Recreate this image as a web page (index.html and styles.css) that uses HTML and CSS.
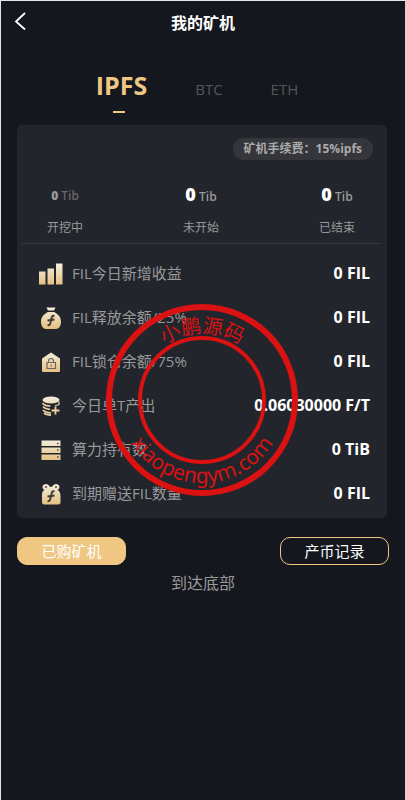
FILE: index.html
```html
<!DOCTYPE html>
<html lang="zh-CN">
<head>
<meta charset="utf-8">
<meta name="viewport" content="width=device-width, initial-scale=1">
<title>我的矿机</title>
<link rel="stylesheet" href="styles.css">
</head>
<body>
<svg class="defs" aria-hidden="true">
  <defs>
    <linearGradient id="gold" x1="0" y1="0" x2="0" y2="24" gradientUnits="userSpaceOnUse">
      <stop offset="0" stop-color="#f4f1e6"/>
      <stop offset="1" stop-color="#e4bd7b"/>
    </linearGradient>
  </defs>
</svg>
<header class="topbar">
  <a class="back" href="#" aria-label="返回">
    <svg width="12" height="18" viewBox="0 0 12 18"><path d="M11 1 2 9.500l9 8" fill="none" stroke="#fff" stroke-width="1.800"/></svg>
  </a>
  <h1>我的矿机</h1>
</header>
<nav class="tabs">
  <button class="tab active" type="button">IPFS</button>
  <button class="tab" type="button">BTC</button>
  <button class="tab" type="button">ETH</button>
</nav>
<main>
  <section class="card">
    <p class="fee">矿机手续费：15%ipfs</p>
    <div class="stats">
      <div class="stat muted"><p class="amount"><b>0</b> <span>Tib</span></p><p>开挖中</p></div>
      <div class="stat"><p class="amount"><b>0</b> <span>Tib</span></p><p>未开始</p></div>
      <div class="stat"><p class="amount"><b>0</b> <span>Tib</span></p><p>已结束</p></div>
    </div>
    <ul class="rows">
      <li>
        <svg class="icon" viewBox="0 0 24 24"><path d="M0 9.500h6.500v13H0zM8.500 6.500H15v16H8.500zM17 1.500h6.500v21H17z" fill="url(#gold)"/></svg>
        <span>FIL今日新增收益</span><b>0 FIL</b>
      </li>
      <li>
        <svg class="icon" viewBox="0 0 24 24"><path d="M7.500 1.500h9L15 4.500H9zM9 6h6c4 2 7 5 7 9.500 0 4.500-2 7.500-5 7.500H7c-3 0-5-3-5-7.500C2 11 5 8 9 6z" fill="url(#gold)"/><path d="M15.500 10c-2.500-1-3 1.500-3.500 4.500s-1 5.500-3.500 4.500M8.500 14.500l7-1" fill="none" stroke="#3d3a36" stroke-width="1.800"/></svg>
        <span>FIL释放余额/25%</span><b>0 FIL</b>
      </li>
      <li>
        <svg class="icon" viewBox="0 0 24 24"><path d="M12 2.500l9 6V21q0 1-1 1H4q-1 0-1-1V8.500z" fill="url(#gold)"/><path d="M8 12.500h8.500v6H8zM9.500 12.500V11a2.500 2.500 0 0 1 5 0v1.500M12.200 14.500v2" fill="none" stroke="#6b655a" stroke-width="1.200"/></svg>
        <span>FIL锁仓余额/75%</span><b>0 FIL</b>
      </li>
      <li>
        <svg class="icon" viewBox="0 0 24 24"><ellipse cx="12" cy="6" rx="8.500" ry="3.500" fill="url(#gold)"/><path d="M20 7.500v3q-2 1-4 1" fill="none" stroke="#e9d8b2" stroke-width="1.200"/><path d="M3.500 9q2 3 8 3M4 12.500q2 2.500 7 2.800M4 16q2 2.500 8 3M5 19.200q2 1.800 7 2" fill="none" stroke="#e9d1a2" stroke-width="1.700"/><path d="M16.500 12.500v8M12.500 16.500h8" fill="none" stroke="#e9d1a2" stroke-width="1.800"/></svg>
        <span>今日单T产出</span><b>0.06030000 F/T</b>
      </li>
      <li>
        <svg class="icon" viewBox="0 0 24 24"><path d="M2.500 2.500h19V8h-19zM2.500 9.500h19V15h-19zM2.500 16.500h19V22h-19z" fill="url(#gold)"/><path d="M18 5.500h1.500M18 12h1.500M18 19h1.500" stroke="#4c4740" stroke-width="1.500"/></svg>
        <span>算力持有数</span><b>0 TiB</b>
      </li>
      <li>
        <svg class="icon" viewBox="0 0 24 24"><path d="M5.500 8C2 6 3.500 2 7 2c3 0 3 3 5 3s2-3 5-3c3.500 0 5 4 1.500 6C21 9 21.500 12 21.500 14v6q0 2.500-2.500 2.500H5.500Q3 22.500 3 20v-6c0-2 0-5 2.500-6z" fill="url(#gold)"/><circle cx="7" cy="5" r="1" fill="#4c4740"/><circle cx="17" cy="5" r="1" fill="#4c4740"/><path d="M15.500 9.500c-2.500-1-3 1.500-3.500 4.500s-1 6-3.500 5M8.500 14.500l7-1" fill="none" stroke="#3d3a36" stroke-width="1.800"/></svg>
        <span>到期赠送FIL数量</span><b>0 FIL</b>
      </li>
    </ul>
    <svg class="stamp" viewBox="-98 -98 196 196">
      <defs>
        <path id="arc-top" d="M-67 0A67 67 0 0 1 67 0"/>
        <path id="arc-bottom" d="M-83 0A83 83 0 0 0 83 0"/>
      </defs>
      <circle r="93" stroke-width="6"/>
      <circle r="62" stroke-width="4"/>
      <text class="stamp-name"><textPath href="#arc-top" startOffset="50%">小鹏源码</textPath></text>
      <text class="stamp-site"><textPath href="#arc-bottom" startOffset="50%">xiaopengym.com</textPath></text>
    </svg>
  </section>
  <div class="actions">
    <button class="btn filled" type="button">已购矿机</button>
    <button class="btn" type="button">产币记录</button>
  </div>
  <p class="end">到达底部</p>
</main>
</body>
</html>
```
FILE: styles.css
```css
* { box-sizing: border-box; margin: 0; padding: 0; }
body {
  min-height: 100vh;
  border: solid #dfe7e6;
  border-width: 1px 0 0 1px;
  background: #14171e;
  color: #999;
  font-family: "Open Sans", "Noto Sans CJK SC", sans-serif;
  font-size: 15px;
}
button { border: 0; background: none; font: inherit; color: inherit; }
.defs { position: absolute; width: 0; height: 0; }
.topbar {
  display: grid;
  grid-template-columns: 40px 1fr 40px;
  align-items: center;
  height: 44px;
}
.back { display: flex; padding: 0 0 4px 13px; }
h1 { color: #fff; font-size: 16px; line-height: 24px; text-align: center; }
.tabs {
  display: flex;
  justify-content: center;
  align-items: baseline;
  height: 80px;
  padding: 22px 12px 0 0;
}
.tab { position: relative; padding: 0 24px; line-height: 36px; color: #555659; }
.tab.active { color: #efc783; font-size: 25px; font-weight: 700; }
.tab.active::after {
  content: "";
  position: absolute;
  left: 41%;
  bottom: -10px;
  width: 12px;
  height: 2px;
  background: #efc783;
}
.card {
  position: relative;
  margin: 0 18px 0 16px;
  padding: 13px 4px 2px;
  border-radius: 5px;
  background: #22252c;
}
.fee {
  width: fit-content;
  margin: 0 10px 0 auto;
  padding: 0 11px;
  border-radius: 11px;
  background: #35363b;
  color: #aaa;
  font-size: 12px;
  font-weight: 700;
  line-height: 22px;
}
.stats {
  display: flex;
  justify-content: space-between;
  margin-right: 2px;
  padding: 20px 26px 5px;
  border-bottom: 1px solid #393a3d;
  font-size: 12px;
}
.stat { text-align: center; line-height: 20px; }
.amount { height: 38px; line-height: 28px; font-weight: 600; }
.amount b { color: #fff; font-size: 18px; }
.muted .amount { line-height: 32px; }
.muted .amount b { color: #999; font-size: 12px; }
.muted .amount span { color: #66676a; }
.rows { padding: 8px 13px 0 18px; list-style: none; }
.rows li { display: flex; align-items: center; gap: 9px; height: 44px; }
.icon { width: 24px; height: 24px; }
.rows span, .rows b { padding-bottom: 2px; line-height: 22px; }
.rows b { margin-left: auto; color: #fff; font-size: 16px; }
.stamp {
  position: absolute;
  left: 50%;
  bottom: 20px;
  width: 196px;
  transform: translateX(-50%);
  fill: none;
  stroke: #da1212;
  pointer-events: none;
}
.stamp text { fill: #da1212; stroke: none; text-anchor: middle; }
.stamp-name { font-size: 20px; }
.stamp-site { font-family: "Noto Sans", sans-serif; font-size: 21px; }
.actions {
  display: flex;
  justify-content: space-between;
  padding: 19px 16px 0;
}
.btn {
  width: 109px;
  height: 28px;
  border: 1px solid #efc783;
  border-radius: 10px;
  color: #fff;
  line-height: 26px;
}
.filled { background: #efc783; }
.end { padding-top: 6px; font-size: 16px; line-height: 24px; text-align: center; }
```
